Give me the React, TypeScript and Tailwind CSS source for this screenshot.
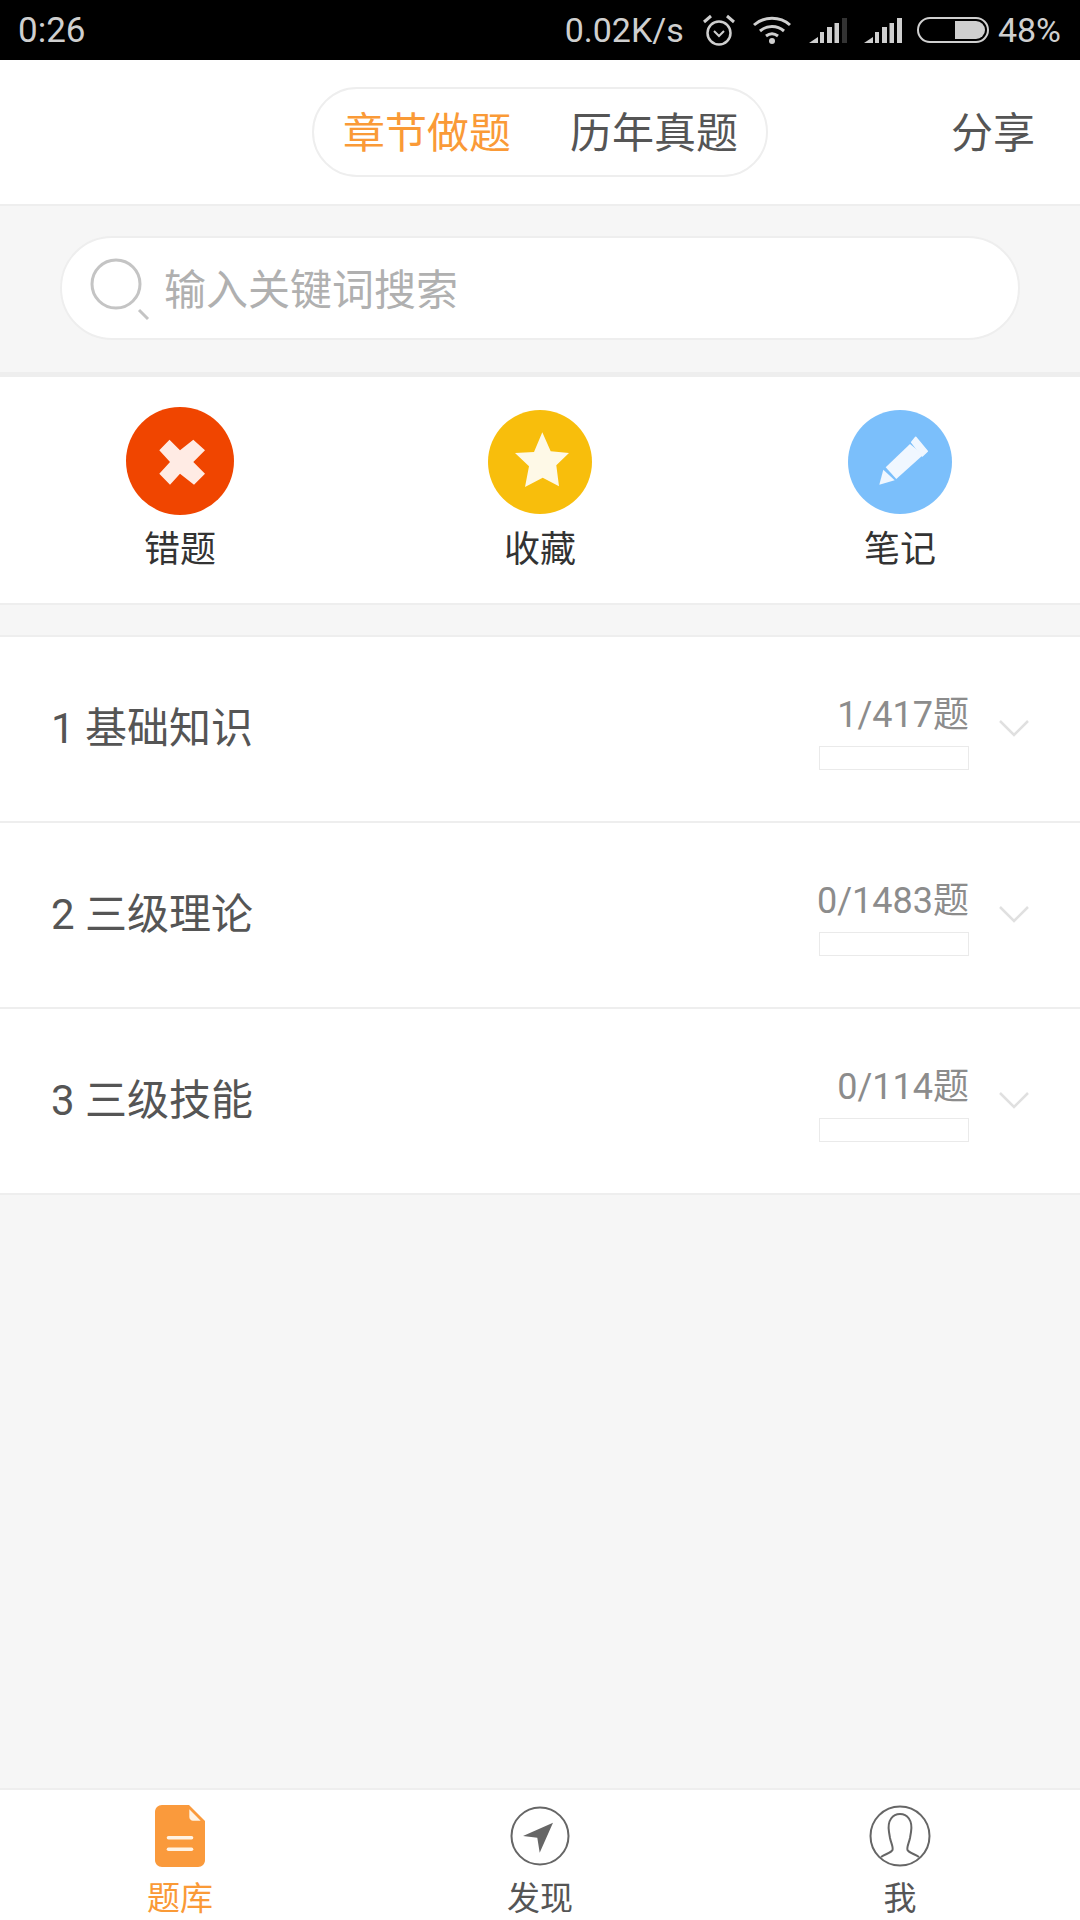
const font = { fontFamily: '"Roboto", "Noto Sans CJK SC", sans-serif' };

const chapters = [
  { title: "1 基础知识", count: "1/417题" },
  { title: "2 三级理论", count: "0/1483题" },
  { title: "3 三级技能", count: "0/114题" },
];

function StatusBar() {
  return (
    <div className="flex h-[60px] items-center justify-between bg-black pl-[18px] pr-[19px] text-[34px] leading-none text-[#cfcfcf]">
      <span className="text-[35px]">0:26</span>
      <div className="flex items-center">
        <span>0.02K/s</span>
        {/* alarm */}
        <svg className="ml-[19px]" width="32" height="32" viewBox="0 0 32 32" fill="none" stroke="#cfcfcf" strokeWidth="2.5">
          <circle cx="16" cy="19" r="11.5" />
          <path d="M11 17l5 5 5-5" strokeWidth="2" />
          <path d="M1 8l7-6M31 8l-7-6" strokeWidth="3" />
        </svg>
        {/* wifi */}
        <svg className="ml-[18px]" width="38" height="28" viewBox="0 0 38 28" fill="none" stroke="#cfcfcf" strokeWidth="3">
          <path d="M1 9C11 0 27 0 37 9" />
          <path d="M7 15c7-6 17-6 24 0" />
          <path d="M13 20c4-3 8-3 12 0" />
          <circle cx="19" cy="25" r="3" fill="#cfcfcf" stroke="none" />
        </svg>
        {/* signal 1 */}
        <svg className="ml-[18px]" width="38" height="26" viewBox="0 0 38 26">
          <path d="M0 26L9 20V26Z" fill="#cfcfcf" />
          <rect x="11" y="15" width="4" height="11" fill="#cfcfcf" />
          <rect x="18" y="10" width="5" height="16" fill="#cfcfcf" />
          <rect x="25.5" y="6" width="4.5" height="20" fill="#cfcfcf" />
          <rect x="33" y="1" width="5" height="25" fill="#333333" />
        </svg>
        {/* signal 2 */}
        <svg className="ml-[17px]" width="38" height="26" viewBox="0 0 38 26">
          <path d="M0 26L9 20V26Z" fill="#cfcfcf" />
          <rect x="11" y="15" width="4" height="11" fill="#cfcfcf" />
          <rect x="18" y="10" width="5" height="16" fill="#cfcfcf" />
          <rect x="25.5" y="6" width="4.5" height="20" fill="#cfcfcf" />
          <rect x="33" y="1" width="5" height="25" fill="#cfcfcf" />
        </svg>
        {/* battery */}
        <div className="ml-[15px] flex h-[26px] w-[72px] justify-end rounded-full border-2 border-[#cfcfcf] p-[2px]">
          <div className="h-full w-[30px] rounded-r-full bg-[#cfcfcf]" />
        </div>
        <span className="ml-[9px]">48%</span>
      </div>
    </div>
  );
}

function TopBar() {
  return (
    <div className="grid h-[146px] grid-cols-[1fr_456px_1fr] items-center border-b-2 border-[#eeeeee] bg-white">
      <div />
      <div className="flex h-[90px] items-center justify-between rounded-full border-2 border-[#eeeeee] pl-[29px] pr-[28px] pt-[3px] text-[42px] leading-none">
        <span className="text-[#fa9a37]">章节做题</span>
        <span className="text-[#555555]">历年真题</span>
      </div>
      <span className="justify-self-end pr-[45px] pt-[3px] text-[42px] leading-none text-[#555555]">分享</span>
    </div>
  );
}

function SearchBar() {
  return (
    <div className="flex h-[171px] items-center border-b-[5px] border-[#eeeeee] px-[60px] pb-[2px]">
      <div className="flex h-[104px] w-[960px] items-center rounded-full border-2 border-[#eeeeee] bg-white pl-[28px]">
        <svg className="mt-[4px]" width="60" height="64" viewBox="0 0 60 64" fill="none" stroke="#c4c4c4">
          <circle cx="26" cy="26" r="24" strokeWidth="3" />
          <path d="M49 52l9 9" strokeWidth="3" />
        </svg>
        <span className="ml-[14px] mt-[5px] text-[42px] leading-none text-[#b0b0b0]">输入关键词搜索</span>
      </div>
    </div>
  );
}

function Shortcut({ label, children }: { label: string; children: React.ReactNode }) {
  return (
    <div className="flex flex-col items-center">
      <div className="flex h-[108px] items-center justify-center">{children}</div>
      <span className="mt-[17px] text-[36px] leading-none text-[#333333]">{label}</span>
    </div>
  );
}

function Shortcuts() {
  return (
    <div className="grid h-[228px] grid-cols-3 border-b-2 border-[#eeeeee] bg-white pt-[30px]">
      <Shortcut label="错题">
        <svg width="108" height="108" viewBox="0 0 108 108">
          <circle cx="54" cy="54" r="54" fill="#f04500" />
          <path d="M33.3 43.3L43.5 32.7 54 43.3 67.3 32.7 79 43.3 67.3 55 79 66.7 68 77.7 54 66.7 44 77.7 33.3 66.7 44 55z" fill="#ffebe4" />
        </svg>
      </Shortcut>
      <Shortcut label="收藏">
        <svg className="mt-[2px]" width="104" height="104" viewBox="0 0 104 104">
          <circle cx="52" cy="52" r="52" fill="#f8be0c" />
          <path d="M54.3 22.3L62.7 41.3 81 43 68.3 55.3 71 76.3 54.7 67.7 37 77 41 56.3 27 43 46 42z" fill="#fef9e7" />
        </svg>
      </Shortcut>
      <Shortcut label="笔记">
        <svg className="mt-[2px]" width="104" height="104" viewBox="0 0 104 104">
          <circle cx="52" cy="52" r="52" fill="#7bbffb" />
          <path d="M63.7 32.3L67.7 27.3 79.3 41.3 74.3 46z" fill="#f0f7ff" strokeLinejoin="round" stroke="#f0f7ff" strokeWidth="1.5" />
          <path d="M37.7 57.3L62 34 75.3 44.7 48.3 69z" fill="#f0f7ff" />
          <path d="M31.3 74.7L35.3 59.7 46.7 70.3z" fill="#f0f7ff" />
        </svg>
      </Shortcut>
    </div>
  );
}

function ChapterRow({ title, count }: { title: string; count: string }) {
  return (
    <div className="flex h-[186px] items-center justify-between border-b-2 border-[#eeeeee] bg-white pl-[51px] pr-[51px]">
      <span className="text-[42px] leading-none text-[#555555]">{title}</span>
      <div className="flex items-center">
        <div className="flex flex-col items-end pt-[9px]">
          <span className="text-[36px] leading-none text-[#8c8c8c]">{count}</span>
          <div className="mt-[13px] h-[24px] w-[150px] border border-[#eaeaea]" />
        </div>
        <svg className="ml-[30px]" width="30" height="18" viewBox="0 0 30 18" fill="none" stroke="#e0e0e0" strokeWidth="2.5">
          <path d="M1 1l14 14L29 1" />
        </svg>
      </div>
    </div>
  );
}

function TabItem({ label, active, children }: { label: string; active?: boolean; children: React.ReactNode }) {
  return (
    <div className="flex flex-col items-center pt-[15px]">
      <div className="flex h-[62px] items-center justify-center">{children}</div>
      <span className={`mt-[15px] text-[33px] leading-none ${active ? "text-[#fa9a37]" : "text-[#555555]"}`}>{label}</span>
    </div>
  );
}

function BottomNav() {
  return (
    <div className="grid h-[132px] grid-cols-3 overflow-hidden border-t-2 border-[#eeeeee] bg-white">
      <TabItem label="题库" active>
        <svg width="50" height="62" viewBox="0 0 50 62">
          <path d="M7 0h27l16 16v39c0 4-3 7-7 7H7c-4 0-7-3-7-7V7c0-4 3-7 7-7z" fill="#fa9a3c" />
          <path d="M34.3 4.3L45.7 15.7 38 15.7c-2 0-3.7-1.7-3.7-3.7z" fill="#fff3e4" />
          <rect x="11.7" y="31" width="26.6" height="3.5" rx="1.75" fill="#fff3e4" />
          <rect x="11.7" y="42.5" width="26.6" height="3.5" rx="1.75" fill="#fff3e4" />
        </svg>
      </TabItem>
      <TabItem label="发现">
        <svg width="60" height="60" viewBox="0 0 60 60" fill="none">
          <circle cx="30" cy="30" r="28.5" stroke="#666666" strokeWidth="2" />
          <path d="M43 16.7L13 30 27.3 31.7 29.7 46.7z" fill="#666666" />
        </svg>
      </TabItem>
      <TabItem label="我">
        <svg width="62" height="62" viewBox="0 0 62 62" fill="none" stroke="#666666" strokeWidth="2">
          <circle cx="31" cy="31" r="29.5" />
          <path d="M12 52C16 49 22 48 23.5 45C24.5 42 22 38 21 33L20 27C18 15 24 9 31 9C38 9 44 15 42 27L41 33C40 38 37.5 42 38.5 45C40 48 46 49 50 52" />
        </svg>
      </TabItem>
    </div>
  );
}

export default function App() {
  return (
    <div className="flex h-[1920px] w-[1080px] flex-col bg-[#f6f6f6]" style={font}>
      <StatusBar />
      <TopBar />
      <SearchBar />
      <Shortcuts />
      <div className="h-[32px] border-b-2 border-[#eeeeee]" />
      {chapters.map((c) => (
        <ChapterRow key={c.title} {...c} />
      ))}
      <div className="flex-1" />
      <BottomNav />
    </div>
  );
}
